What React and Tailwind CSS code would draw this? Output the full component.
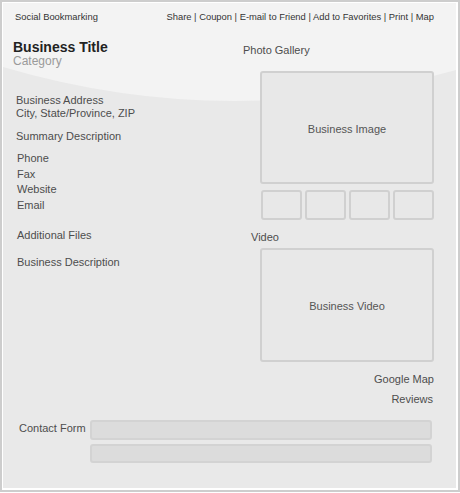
import React from 'react'

const font = { fontFamily: '"Liberation Sans", Arial, sans-serif' }

function Box({ className, children }) {
  return (
    <div className={`flex items-center justify-center rounded-[3px] border-2 border-[#d0d0d0] bg-[#e8e8e8] text-[11px] text-[#555] ${className}`}>
      {children}
    </div>
  )
}

function App() {
  return (
    <div className="h-[492px] w-[460px] bg-white" style={font}>
      <div className="h-full w-full border-2 border-[#cdcdcd] pt-px pl-px pr-0.5 pb-0.5">
        <div className="relative h-full w-full overflow-hidden bg-[#e9e9e9]">
          {/* light wave at the top */}
          <svg className="absolute left-0 top-0" width="453" height="140" viewBox="0 0 453 140" preserveAspectRatio="none">
            <path d="M0 0 H453 V67 Q226 130.5 0 64 Z" fill="#f3f3f3" />
          </svg>

          <div className="relative">
            {/* top links */}
            <div className="flex justify-between pl-3 pr-[22px] pt-2 text-[9.4px] leading-[11px] text-[#333]">
              <span>Social Bookmarking</span>
              <span>Share | Coupon | E-mail to Friend | Add to Favorites | Print | Map</span>
            </div>

            <div className="flex">
              {/* left column */}
              <div className="w-[240px] pl-[10px] text-[11px] text-[#4d4d4d]">
                <div className="mt-[18px] text-[14px] font-bold leading-[15px] text-[#222]">Business Title</div>
                <div className="text-[12px] leading-[13px] text-[#9a9a9a]">Category</div>

                <div className="ml-[3px] mt-[25.5px] leading-[13px]">
                  <div>Business Address</div>
                  <div>City, State/Province, ZIP</div>
                </div>
                <div className="ml-[3px] mt-[10px] leading-[13px]">Summary Description</div>

                <div className="ml-1 mt-[8.5px] leading-[15.67px]">
                  <div>Phone</div>
                  <div>Fax</div>
                  <div>Website</div>
                  <div>Email</div>
                </div>

                <div className="ml-1 mt-[15.8px] leading-[13px]">Additional Files</div>
                <div className="ml-1 mt-[14px] leading-[13px]">Business Description</div>
              </div>

              {/* right column */}
              <div className="w-[191px] text-[11px] leading-[13px] text-[#4d4d4d]">
                <div className="mt-[21.5px]">Photo Gallery</div>
                <Box className="ml-[17px] mt-[14.5px] h-[113px] w-[174px] pt-[3px]">Business Image</Box>
                <div className="ml-[18px] mt-[6px] flex gap-[3px]">
                  <Box className="h-[30px] w-[41px]" />
                  <Box className="h-[30px] w-[41px]" />
                  <Box className="h-[30px] w-[41px]" />
                  <Box className="h-[30px] w-[41px]" />
                </div>
                <div className="ml-2 mt-[10.5px]">Video</div>
                <Box className="ml-[17px] mt-[4.5px] h-[114px] w-[174px] pt-[2px]">Business Video</Box>
                <div className="mt-[10.5px] text-right">Google Map</div>
                <div className="mt-[7px] pr-px text-right">Reviews</div>
              </div>
            </div>

            {/* contact form */}
            <div className="mt-[14.5px] flex pl-4 text-[11px] text-[#4d4d4d]">
              <div className="w-[71px] pt-[2px] leading-[13px]">Contact Form</div>
              <div className="flex w-[342px] flex-col gap-[4px]">
                <div className="h-[20px] rounded-[3px] border-2 border-[#d3d3d3] bg-[#dcdcdc]" />
                <div className="h-[19px] rounded-[3px] border-2 border-[#d3d3d3] bg-[#dcdcdc]" />
              </div>
            </div>
          </div>
        </div>
      </div>
    </div>
  )
}

export default App
